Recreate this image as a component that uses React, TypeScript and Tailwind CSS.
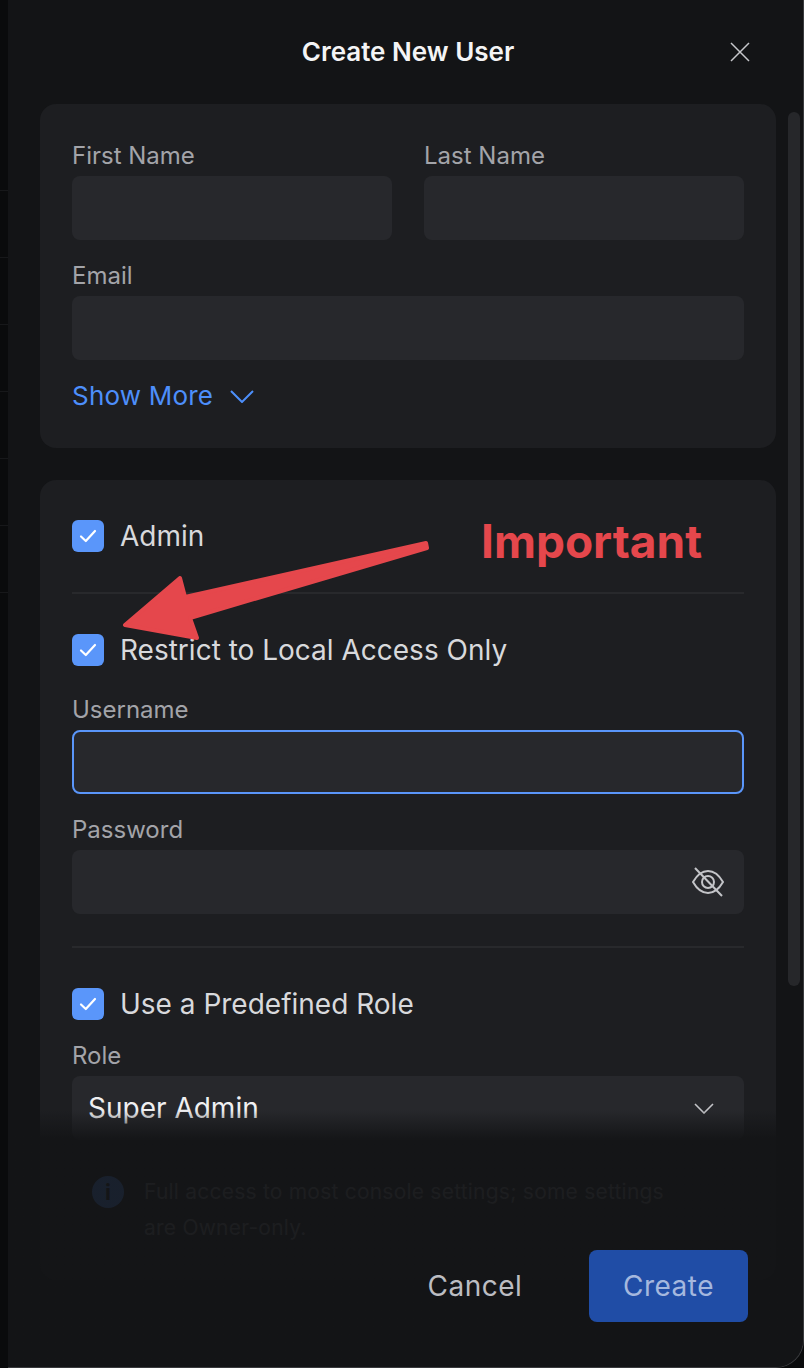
import React from "react";

const font = { fontFamily: "Inter, 'Noto Sans', sans-serif" };

const labelClass = "block h-[40px] text-[24px] leading-[40px] text-[#a3a4a9]";
const inputClass = "block h-16 w-full rounded-lg bg-[#27282c] outline-none";

const Field = ({ label, className = "" }: { label: string; className?: string }) => (
  <div className={className}>
    <label className={labelClass}>{label}</label>
    <input className={inputClass} />
  </div>
);

const Check = ({ label }: { label: string }) => (
  <div className="flex h-8 items-center gap-4">
    <div className="flex h-8 w-8 items-center justify-center rounded-md bg-[#5a96fa]">
      <svg width="18" height="14" viewBox="0 0 18 14" fill="none">
        <path d="M2 7.5 L6.8 12 L16 2" stroke="#ffffff" strokeWidth="2.2" strokeLinecap="round" strokeLinejoin="round" />
      </svg>
    </div>
    <span className="text-[28px] leading-8 text-[#d8d9dc]">{label}</span>
  </div>
);

const App = () => {
  return (
    <div className="flex h-[1368px] w-[804px] overflow-hidden bg-[#0a0b0c]" style={font}>
      {/* page behind the modal */}
      <div className="flex w-2 flex-col gap-[66px] pt-[190px]">
        {[0, 1, 2, 3, 4, 5, 6].map((i) => (
          <div key={i} className="h-px bg-[#17181a]" />
        ))}
      </div>

      <div className="relative flex w-[796px] flex-col overflow-hidden rounded-br-[28px] border-r border-b border-[#3a3b3e] bg-[#131416]">
        <div className="flex h-[104px] shrink-0 items-start justify-center pt-[35px] pl-[5px]">
          <h1 className="text-[26px] leading-[34px] font-semibold text-[#f4f4f5]">Create New User</h1>
          <svg className="absolute top-[42px] left-[722px]" width="20" height="20" viewBox="0 0 20 20" fill="none">
            <path d="M1 1 L19 19 M19 1 L1 19" stroke="#c6c7cb" strokeWidth="1.5" />
          </svg>
        </div>

        {/* scrollbar */}
        <div className="absolute top-[112px] left-[780px] h-[874px] w-3 rounded-md bg-[#26272a]" />

        <div className="flex min-h-0 flex-1 flex-col gap-8 overflow-hidden pl-8">
          <div className="w-[736px] shrink-0 rounded-2xl bg-[#1d1e21] px-8 pt-8 pb-8">
            <div className="flex gap-8">
              <Field label="First Name" className="w-[320px]" />
              <Field label="Last Name" className="w-[320px]" />
            </div>
            <Field label="Email" className="mt-4" />
            <div className="mt-4 flex h-[40px] items-center gap-[17px]">
              <span className="-mt-[2px] text-[26px] tracking-[0.2px] text-[#4d8ffb]">Show More</span>
              <svg width="24" height="13" viewBox="0 0 24 13" fill="none">
                <path d="M1 1 L12 12 L23 1" stroke="#4d8ffb" strokeWidth="2" />
              </svg>
            </div>
          </div>

          <div className="relative h-[800px] w-[736px] shrink-0 rounded-2xl bg-[#1d1e21] px-8 pt-10">
            <Check label="Admin" />
            <div className="mt-10 h-0.5 bg-[#28292c]" />
            <div className="mt-10">
              <Check label="Restrict to Local Access Only" />
            </div>
            <div className="mt-[24px]">
              <label className={labelClass}>Username</label>
              <input className="block h-16 w-full rounded-lg border-2 border-[#5a96fa] bg-[#27282c] outline-none" />
            </div>
            <div className="mt-4">
              <label className={labelClass}>Password</label>
              <div className="relative">
                <input className={inputClass} />
                <svg className="absolute top-[17px] left-[620px]" width="32" height="30" viewBox="0 0 32 30" fill="none">
                  <path
                    d="M1 15 C5 8 10 4 16 4 C22 4 27 8 31 15 C27 22 22 26 16 26 C10 26 5 22 1 15 Z"
                    stroke="#c3c4c8"
                    strokeWidth="2"
                  />
                  <circle cx="16" cy="15" r="6" stroke="#c3c4c8" strokeWidth="2" />
                  <path d="M3 1 L30 29" stroke="#c3c4c8" strokeWidth="2" />
                </svg>
              </div>
            </div>
            <div className="mt-8 h-0.5 bg-[#28292c]" />
            <div className="mt-10">
              <Check label="Use a Predefined Role" />
            </div>
            <div className="mt-4">
              <label className={labelClass}>Role</label>
              <div className="flex h-16 items-center justify-between rounded-lg bg-[#27282c] pr-[30px] pl-4">
                <span className="text-[28px] text-[#f0f0f2]">Super Admin</span>
                <svg width="20" height="11" viewBox="0 0 20 11" fill="none">
                  <path d="M1 1 L10 10 L19 1" stroke="#c3c4c8" strokeWidth="1.6" />
                </svg>
              </div>
            </div>
            <div className="mt-9 flex gap-5 pl-5">
              <div className="flex h-8 w-8 shrink-0 items-center justify-center rounded-full bg-[#4d8ffb] text-[22px] font-bold text-[#1d1e21]">
                i
              </div>
              <p className="-mt-[2px] w-[540px] text-[21px] leading-[36px] tracking-[0.22px] text-[#74757a]">
                Full access to most console settings; some settings are Owner-only.
              </p>
            </div>
          </div>
        </div>

        {/* footer fades over the scrolling content */}
        <div className="absolute top-[1110px] left-0 flex h-[258px] w-full flex-col items-end bg-gradient-to-b from-[#13141600] via-[#131416e6] via-[11%] to-[#131416e6] pt-[140px] pr-[55px]">
          <div className="flex items-center gap-[35px]">
            <button className="h-[72px] w-[158px] text-[28px] tracking-[0.5px] text-[#bcbdc2]">Cancel</button>
            <button className="h-[72px] w-[159px] rounded-lg bg-[#204da6] text-[28px] tracking-[0.5px] text-[#a5b8de]">
              Create
            </button>
          </div>
        </div>

        {/* arrow and note pasted on the screenshot */}
        <svg className="absolute top-[530px] left-[92px]" width="340" height="120" viewBox="0 0 340 120" fill="none">
          <path
            d="M326 13 L85 67 L80 48 L25 95 L97 108 L90 88 L327 18 Z"
            fill="#e5474c"
            stroke="#e5474c"
            strokeWidth="4"
            strokeLinejoin="round"
          />
        </svg>
        <span className="absolute top-[509px] left-[473px] text-[46px] leading-[64px] font-bold text-[#e5474c]">
          Important
        </span>
      </div>
    </div>
  );
};

export default App;
